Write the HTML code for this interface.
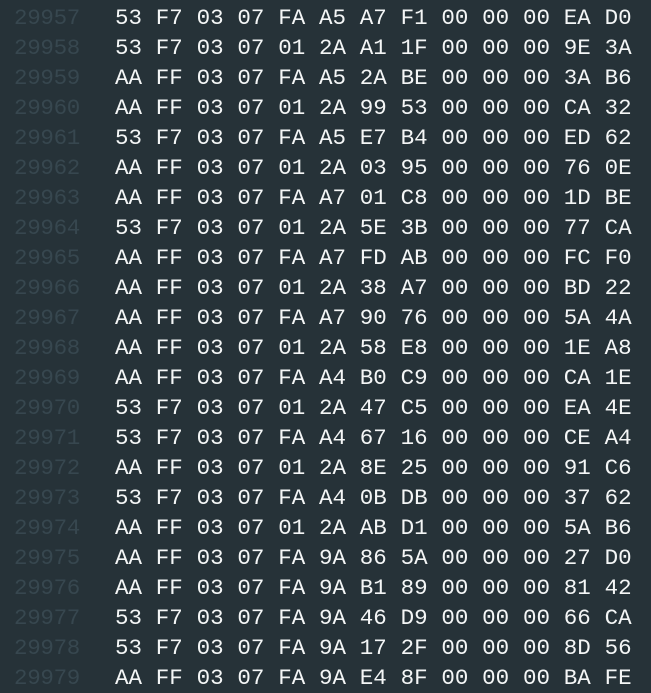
<!DOCTYPE html>
<html><head><style>
html,body{margin:0;padding:0;background:#263238;width:651px;height:687px;overflow:hidden}
.r{position:absolute;left:0;height:30px;line-height:30px;font-family:"Liberation Mono","DejaVu Sans Mono",monospace;font-size:22px;white-space:nowrap}
.n{position:absolute;left:14px;color:#37474f;font-size:22.5px;letter-spacing:-0.3px}
.h{position:absolute;left:115px;color:#f4f6f6;font-size:22.5px}
.h span{display:inline-block;width:40.8px}
</style></head><body>
<div id="c"></div>
<script>
var d=`29957 53 F7 03 07 FA A5 A7 F1 00 00 00 EA D0
29958 53 F7 03 07 01 2A A1 1F 00 00 00 9E 3A
29959 AA FF 03 07 FA A5 2A BE 00 00 00 3A B6
29960 AA FF 03 07 01 2A 99 53 00 00 00 CA 32
29961 53 F7 03 07 FA A5 E7 B4 00 00 00 ED 62
29962 AA FF 03 07 01 2A 03 95 00 00 00 76 0E
29963 AA FF 03 07 FA A7 01 C8 00 00 00 1D BE
29964 53 F7 03 07 01 2A 5E 3B 00 00 00 77 CA
29965 AA FF 03 07 FA A7 FD AB 00 00 00 FC F0
29966 AA FF 03 07 01 2A 38 A7 00 00 00 BD 22
29967 AA FF 03 07 FA A7 90 76 00 00 00 5A 4A
29968 AA FF 03 07 01 2A 58 E8 00 00 00 1E A8
29969 AA FF 03 07 FA A4 B0 C9 00 00 00 CA 1E
29970 53 F7 03 07 01 2A 47 C5 00 00 00 EA 4E
29971 53 F7 03 07 FA A4 67 16 00 00 00 CE A4
29972 AA FF 03 07 01 2A 8E 25 00 00 00 91 C6
29973 53 F7 03 07 FA A4 0B DB 00 00 00 37 62
29974 AA FF 03 07 01 2A AB D1 00 00 00 5A B6
29975 AA FF 03 07 FA 9A 86 5A 00 00 00 27 D0
29976 AA FF 03 07 FA 9A B1 89 00 00 00 81 42
29977 53 F7 03 07 FA 9A 46 D9 00 00 00 66 CA
29978 53 F7 03 07 FA 9A 17 2F 00 00 00 8D 56
29979 AA FF 03 07 FA 9A E4 8F 00 00 00 BA FE`.split("\n");
var h="";
d.forEach(function(l,i){var p=l.split(" ");h+='<div class="r" style="top:'+(3+i*30)+'px"><span class="n">'+p[0]+'</span><span class="h">'+p.slice(1).map(function(x){return "<span>"+x+"</span>"}).join("")+'</span></div>';});
document.getElementById("c").innerHTML=h;
</script>
</body></html>
